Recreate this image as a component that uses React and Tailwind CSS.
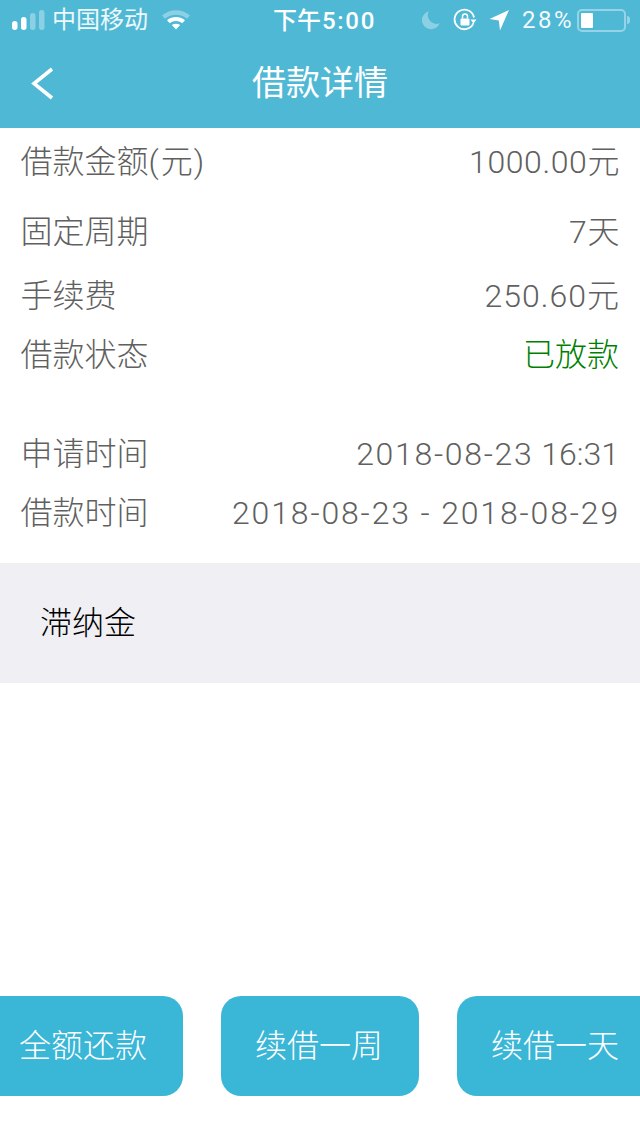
const CN_FONT = "font-['Roboto','Noto_Sans_CJK_SC',sans-serif]"

function SignalBars() {
  return (
    <svg width="34" height="24" viewBox="0 0 34 24" className="shrink-0">
      <rect x="0" y="13" width="5.5" height="9" rx="2.7" fill="#fff" />
      <rect x="9" y="9" width="5.5" height="13" rx="2.7" fill="#fff" />
      <rect x="18" y="5" width="5.5" height="17" rx="2.7" fill="#fff" fillOpacity="0.35" />
      <rect x="27" y="2" width="5.5" height="20" rx="2.7" fill="#fff" fillOpacity="0.35" />
    </svg>
  )
}

function WifiIcon() {
  return (
    <svg width="30" height="24" viewBox="0 0 30 24" className="shrink-0">
      <path d="M1 7.5C9 0.5 21 0.5 29 7.5L26 10.8C19.5 5.5 10.5 5.5 4 10.8Z" fill="#fff" fillOpacity="0.35" />
      <path d="M6 12.3C11.2 8 18.8 8 24 12.3L21.2 15.2C17.4 12.4 12.6 12.4 8.8 15.2Z" fill="#fff" />
      <path d="M10.8 17C13.3 15.2 16.7 15.2 19.2 17L15 21.5Z" fill="#fff" />
    </svg>
  )
}

function MoonIcon() {
  return (
    <svg width="20" height="20" viewBox="0 0 22 22" className="shrink-0">
      <path d="M8.5 1.5A10 10 0 1 0 20.5 14.5A9.5 9.5 0 0 1 8.5 1.5Z" fill="#fff" fillOpacity="0.35" />
    </svg>
  )
}

function RotationLockIcon() {
  return (
    <svg width="24" height="24" viewBox="0 0 24 24" className="shrink-0" fill="none">
      <path d="M20.5 15A9.8 9.8 0 1 1 21 9.5" stroke="#fff" strokeWidth="1.8" />
      <path d="M17.5 11.5H23.5L20.5 15.5Z" fill="#fff" />
      <rect x="7.5" y="10.5" width="9" height="7" rx="1" fill="#fff" />
      <path d="M9.5 10.5V8.5A2.5 2.5 0 0 1 14.5 8.5V10.5" stroke="#fff" strokeWidth="1.5" />
    </svg>
  )
}

function LocationIcon() {
  return (
    <svg width="21" height="22" viewBox="0 0 21 22" className="shrink-0">
      <path d="M20 1L11 21.5L9.8 11.5L0.5 10Z" fill="#fff" />
    </svg>
  )
}

function Battery() {
  return (
    <div className="flex items-center shrink-0">
      <div className="w-[49px] h-[23px] rounded-[5px] border-2 border-white/40 p-[2px]">
        <div className="w-[12px] h-full bg-white rounded-[1px]" />
      </div>
      <div className="w-[3px] h-[8px] bg-white/40 rounded-r-full ml-[1px]" />
    </div>
  )
}

function StatusBar() {
  return (
    <div className="relative h-[40px] flex items-center justify-between pl-[12px] pr-[10px] text-white text-[24px]">
      <div className="flex items-center gap-[7px]">
        <SignalBars />
        <span className="text-white/90 -ml-[1px]">中国移动</span>
        <div className="ml-[6px]">
          <WifiIcon />
        </div>
      </div>
      <span className="absolute left-[273px] top-[1px] leading-[40px] font-medium">
        下午<span className="tracking-[1.7px] ml-[1px]">5:00</span>
      </span>
      <div className="flex items-center">
        <div className="mr-[12px]"><MoonIcon /></div>
        <div className="mr-[12px]"><RotationLockIcon /></div>
        <div className="mr-[12px]"><LocationIcon /></div>
        <span className="mr-[3px] tracking-[2.5px] text-white/95">28%</span>
        <Battery />
      </div>
    </div>
  )
}

function Row({ label, value, height, valueColor = 'text-[#606060]', valueClass = 'tracking-[0.6px] -mr-[1px]' }) {
  return (
    <div className={`flex items-center justify-between pl-[20.5px] pr-[21px] ${height}`}>
      <span className="text-[#606060]">{label}</span>
      <span className={`${valueColor} ${valueClass}`}>{value}</span>
    </div>
  )
}

function ActionButton({ width, pad, children }) {
  return (
    <button className={`h-[100px] shrink-0 bg-[#3ab6d7] text-white text-[32px] font-light flex items-center ${width} ${pad}`}>
      {children}
    </button>
  )
}

export default function App() {
  return (
    <div className={`w-[640px] h-[1136px] overflow-hidden bg-white flex flex-col ${CN_FONT}`}>
      <div className="h-[128px] shrink-0 bg-[#4fb8d5]">
        <StatusBar />
        <div className="relative h-[88px] flex items-center justify-center text-white text-[34px] pb-[2px]">
          <svg width="26" height="36" viewBox="0 0 26 36" fill="none" className="absolute left-[30px] top-[26px]">
            <path d="M22 3L4 17.5L22 32" stroke="#fff" strokeWidth="3.6" />
          </svg>
          借款详情
        </div>
      </div>

      <div className="text-[32px] font-light">
        <Row
          label={<>借款金额<span className="tracking-[2px]">(</span>元<span className="ml-[1px]">)</span></>}
          value="1000.00元"
          height="h-[68px]"
        />
        <Row label="固定周期" value="7天" height="h-[72px]" />
        <Row label="手续费" value="250.60元" height="h-[55px]" valueClass="tracking-[1px] -mr-[1px]" />
        <Row label="借款状态" value="已放款" height="h-[63px]" valueColor="text-[#008000]" valueClass="" />
        <div className="h-[38px]" />
        <Row
          label="申请时间"
          value={<><span className="tracking-[1.7px]">2018-08-23</span> 16:31</>}
          height="h-[60px]"
          valueClass=""
        />
        <Row label="借款时间" value="2018-08-23 - 2018-08-29" height="h-[58px]" valueClass="tracking-[1.85px] -mr-[1px]" />
      </div>

      <div className="mt-[21px] h-[120px] shrink-0 bg-[#efeff4] flex items-center pl-[40px] text-[32px] font-light text-black">
        滞纳金
      </div>

      <div className="mt-[313px] flex items-center gap-[38px]">
        <ActionButton width="w-[183px]" pad="pl-[19px] rounded-r-[20px]">全额还款</ActionButton>
        <ActionButton width="w-[198px]" pad="justify-center pr-[2px] rounded-[20px]">续借一周</ActionButton>
        <ActionButton width="w-[183px]" pad="pl-[34px] rounded-l-[20px]">续借一天</ActionButton>
      </div>
    </div>
  )
}
